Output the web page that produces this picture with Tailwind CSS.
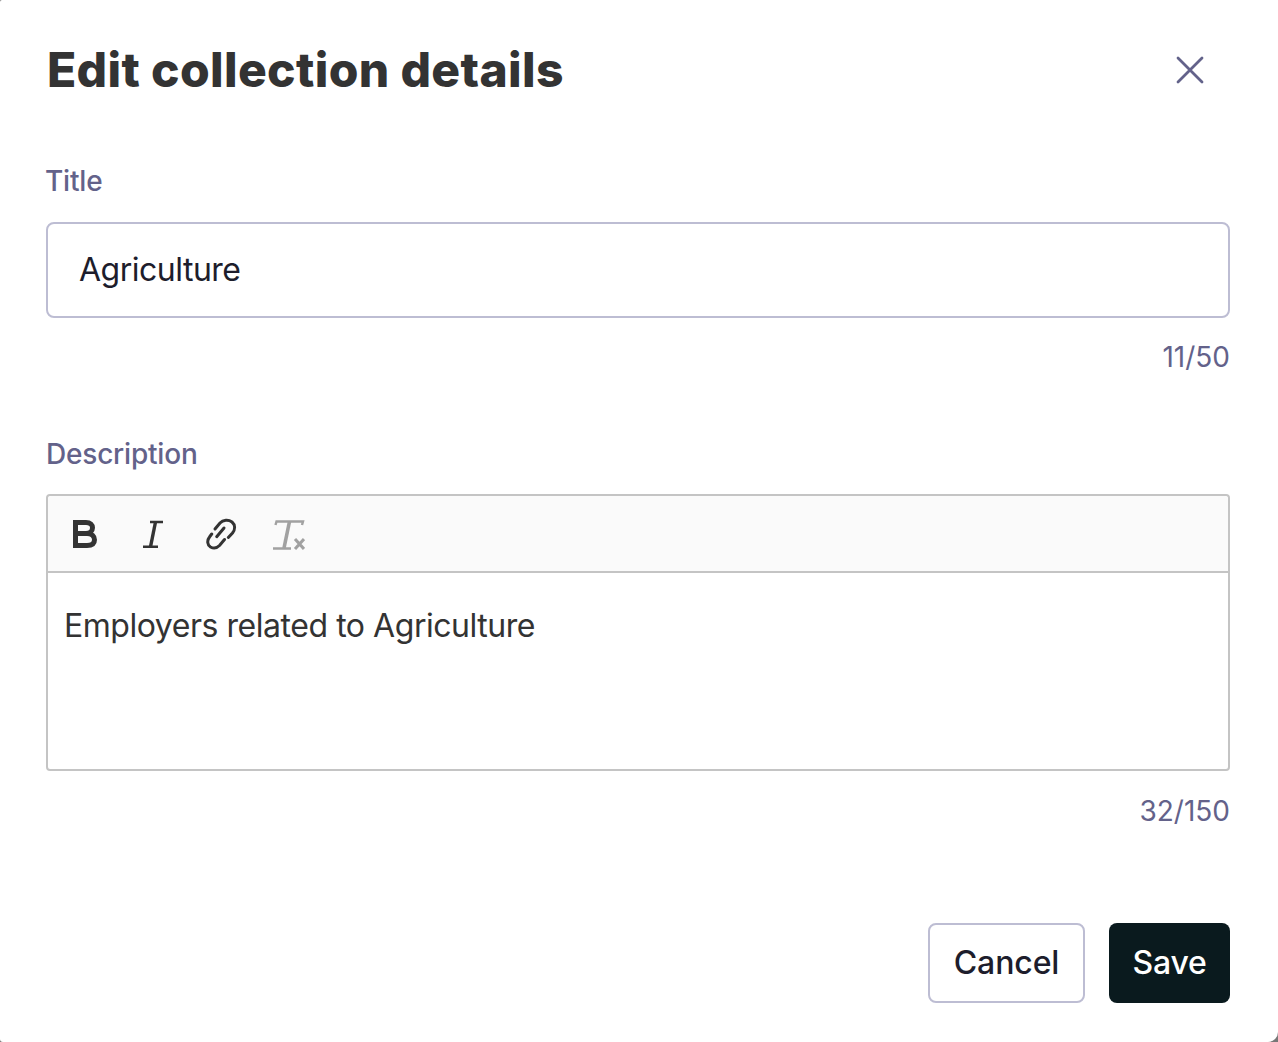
<!DOCTYPE html>
<html lang="en">
  <head>
    <meta charset="UTF-8" />
    <title>Edit collection details</title>
    <script src="https://cdn.jsdelivr.net/npm/@tailwindcss/browser@4"></script>
  </head>
  <body class="bg-[#777777] font-['Inter',sans-serif] h-[1042px] overflow-hidden">
    <div class="h-[1042px] pl-[46px] pr-[48px] bg-white rounded-tl-[2px] rounded-bl-[3px] rounded-br-[10px]">

      <!-- header -->
      <div class="flex items-center justify-between h-[140px] pr-[25px]">
        <h1 class="pl-px text-[48px] leading-[56px] font-extrabold tracking-[0.35px] text-[#333333]">Edit collection details</h1>
        <button>
          <svg class="block w-[30px] h-[30px] text-[#63628a]" viewBox="0 0 30 30" fill="none" stroke="currentColor" stroke-width="2.800" stroke-linecap="round">
            <path d="M3 3 27 27M27 3 3 27" />
          </svg>
        </button>
      </div>

      <!-- title -->
      <label class="block mt-[20px] -ml-px text-[28px] leading-[42px] font-medium tracking-[-0.2px] text-[#63628a]">Title</label>
      <div class="mt-[20px] h-[96px] flex items-center px-[31px] border-2 border-[#bdbdd3] rounded-[8px] text-[32px] tracking-[-0.5px] text-[#1d1d2c]">Agriculture</div>
      <div class="mt-[19px] text-right text-[28px] leading-[40px] text-[#63628a]">11/50</div>

      <!-- description -->
      <label class="block mt-[56px] text-[28px] leading-[42px] font-medium tracking-[-0.2px] text-[#63628a]">Description</label>
      <div class="mt-[19px] h-[277px] border-2 border-[#c4c4c4] rounded-[4px]">
        <div class="h-[77px] flex items-center pl-[3px] bg-[#fafafa] border-b-2 border-[#c4c4c4] rounded-t-[4px]">
          <div class="w-[68px] flex justify-center">
            <svg class="block w-[28px] h-[32px] text-[#333333]" viewBox="0 0 28 32" fill="none" stroke="currentColor" stroke-width="5">
              <path d="M2 4.500H15C19.500 4.500 21.500 6.800 21.500 9.800C21.500 13 19 15.500 15 15.500H6" />
              <path d="M6 15.500H16C21 15.500 23.500 18.500 23.500 21.800C23.500 25.300 21 27.500 16 27.500H2" />
              <path d="M4.500 2V30" />
            </svg>
          </div>
          <div class="w-[68px] flex justify-center">
            <svg class="block w-[22px] h-[32px] text-[#333333]" viewBox="0 0 22 32" fill="none" stroke="currentColor">
              <path stroke-width="2.400" d="M8 4H21M1 28.800H16" />
              <path stroke-width="3.400" d="M13.500 4 8.500 28.800" />
            </svg>
          </div>
          <div class="w-[68px] flex justify-center">
            <svg class="block w-[32px] h-[32px] text-[#333333]" viewBox="0 0 32 32" fill="none" stroke="currentColor" stroke-width="3" stroke-linecap="round">
              <path d="M10 11 15 5C18 1.800 23.500 1.500 27 4C30.500 7 30.200 11.500 27.500 15L23.300 19.500" />
              <path d="M6.700 16 4.500 19C1.800 22.500 2.300 27 5.500 29C9 31 12.500 29.500 14.500 27.500L19.500 21.500" />
              <path d="M11.700 18.700 19 10" />
            </svg>
          </div>
          <div class="w-[68px] flex justify-center">
            <svg class="block w-[32px] h-[32px] text-[#a1a1a1]" viewBox="0 0 32 32" fill="none" stroke="currentColor">
              <path stroke-width="2.400" d="M2.500 7 3.500 3.500H30L29 7M0 30.500H18" />
              <path stroke-width="3.600" d="M16.500 3.500 11 30" />
              <path stroke-width="3" d="M22 21 31 31M31 21 22 31" />
            </svg>
          </div>
        </div>
        <div class="pt-[33px] pl-[16px] text-[32px] leading-[40px] tracking-[-0.46px] text-[#333333]">Employers related to Agriculture</div>
      </div>
      <div class="mt-[20px] text-right text-[28px] leading-[40px] text-[#63628a]">32/150</div>

      <!-- buttons -->
      <div class="mt-[92px] flex justify-end gap-[24px]">
        <button class="h-[80px] w-[157px] bg-white border-2 border-[#bdbdd3] rounded-[8px] text-[32px] font-medium tracking-[-0.1px] text-[#1d1d2c]">Cancel</button>
        <button class="h-[80px] w-[121px] bg-[#0a1a1e] rounded-[8px] text-[32px] font-medium tracking-[-0.2px] text-white">Save</button>
      </div>
    </div>
  </body>
</html>
